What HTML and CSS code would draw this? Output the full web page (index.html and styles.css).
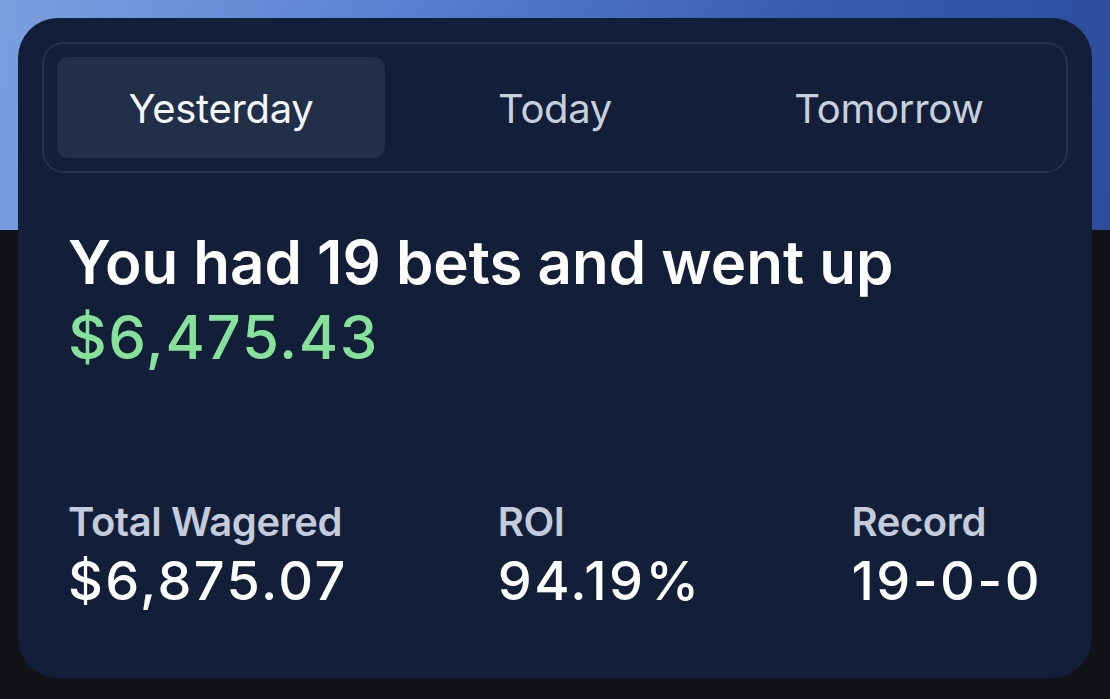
FILE: index.html
```html
<!DOCTYPE html>
<html>
<head>
<meta charset="utf-8">
<link rel="stylesheet" href="styles.css">
</head>
<body>
<div class="backdrop"></div>
<main class="card">
  <nav class="tabs">
    <div class="tab active">Yesterday</div>
    <div class="tab">Today</div>
    <div class="tab">Tomorrow</div>
  </nav>
  <section class="summary">
    <h1 class="headline">You had 19 bets and went up</h1>
    <div class="amount">$6,475.43</div>
  </section>
  <section class="stats">
    <div class="stat">
      <div class="label">Total Wagered</div>
      <div class="value">$6,875.07</div>
    </div>
    <div class="stat">
      <div class="label">ROI</div>
      <div class="value">94.19%</div>
    </div>
    <div class="stat">
      <div class="label">Record</div>
      <div class="value">19-0-0</div>
    </div>
  </section>
</main>
</body>
</html>
```

FILE: styles.css
```css
* { box-sizing: border-box; }
html, body {
  margin: 0;
  padding: 0;
  width: 1110px;
  height: 699px;
  overflow: hidden;
}
body {
  background: #111318;
  font-family: Inter, "Noto Sans", sans-serif;
  position: relative;
  padding: 18px 0 0 18px;
}
.backdrop {
  position: absolute;
  left: 0;
  top: 0;
  width: 1110px;
  height: 230px;
  background: linear-gradient(100deg, #7c9fe0 0%, #5b80cf 35%, #3a5cae 70%, #2d4c9c 100%);
  z-index: 0;
}
.card {
  position: relative;
  z-index: 1;
  width: 1074px;
  height: 660px;
  background: #131f38;
  border-radius: 40px;
  padding: 24px;
  display: flex;
  flex-direction: column;
}
.tabs {
  display: grid;
  grid-template-columns: repeat(3, 1fr);
  gap: 6px;
  padding: 13px;
  border: 2px solid #25334f;
  border-radius: 22px;
  height: 131px;
}
.tab {
  display: flex;
  align-items: center;
  justify-content: center;
  font-size: 40px;
  color: #c8cfdd;
  border-radius: 11px;
  letter-spacing: -0.3px;
  padding-top: 2px;
}
.tab.active {
  background: #222f48;
  color: #f4f6fa;
}
.summary {
  padding: 52px 26px 0;
}
.headline {
  margin: 0;
  font-size: 60px;
  font-weight: 600;
  color: #ffffff;
  line-height: 75px;
  letter-spacing: 0;
}
.amount {
  font-size: 60px;
  font-weight: 500;
  color: #86e19b;
  line-height: 75px;
  letter-spacing: 1.6px;
}
.stats {
  margin-top: auto;
  padding: 0 26px 40px;
  display: flex;
  justify-content: space-between;
}
.label {
  font-size: 40px;
  font-weight: 600;
  color: #c4cbdb;
  line-height: 52px;
  letter-spacing: -0.4px;
}
.value {
  font-size: 54px;
  font-weight: 500;
  color: #ffffff;
  line-height: 66px;
  letter-spacing: 2.4px;
}
```
